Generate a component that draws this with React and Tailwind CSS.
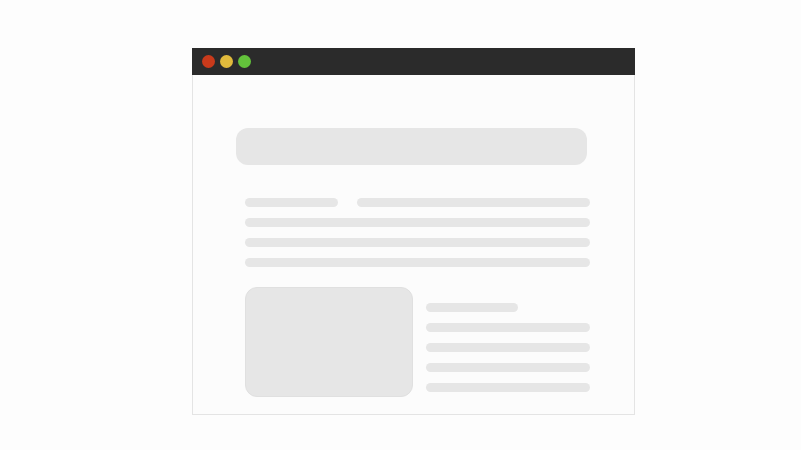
export default function App() {
  return (
    <div className="w-[801px] h-[450px] bg-[#fdfdfd] flex flex-col items-start">
      <div className="ml-[192px] mt-[48px] w-[443px] h-[367px] flex flex-col">
        <div className="h-[27px] bg-[#2b2b2b] flex items-center pl-[10px] gap-[5px]">
          <div className="w-[13px] h-[13px] rounded-full bg-[#c93a1b]" />
          <div className="w-[13px] h-[13px] rounded-full bg-[#e1ba3c]" />
          <div className="w-[13px] h-[13px] rounded-full bg-[#63c23b]" />
        </div>
        <div className="flex-1 bg-[#fcfcfc] border border-t-0 border-[#e4e4e4] flex flex-col">
          <div className="ml-[43px] mt-[53px] w-[351px] h-[37px] rounded-[12px] bg-[#e6e6e6]" />
          <div className="ml-[52px] mt-[33px] w-[345px] flex flex-col gap-[11px]">
            <div className="flex gap-[19px]">
              <div className="w-[93px] h-[9px] rounded-full bg-[#e6e6e6]" />
              <div className="flex-1 h-[9px] rounded-full bg-[#e6e6e6]" />
            </div>
            <div className="h-[9px] rounded-full bg-[#e6e6e6]" />
            <div className="h-[9px] rounded-full bg-[#e6e6e6]" />
            <div className="h-[9px] rounded-full bg-[#e6e6e6]" />
          </div>
          <div className="ml-[52px] mt-[20px] w-[345px] flex gap-[13px]">
            <div className="w-[168px] h-[110px] rounded-[12px] bg-[#e6e6e6] border border-[#e0e0e0]" />
            <div className="flex-1 flex flex-col gap-[11px] pt-[16px]">
              <div className="w-[92px] h-[9px] rounded-full bg-[#e6e6e6]" />
              <div className="h-[9px] rounded-full bg-[#e6e6e6]" />
              <div className="h-[9px] rounded-full bg-[#e6e6e6]" />
              <div className="h-[9px] rounded-full bg-[#e6e6e6]" />
              <div className="h-[9px] rounded-full bg-[#e6e6e6]" />
            </div>
          </div>
        </div>
      </div>
    </div>
  );
}
